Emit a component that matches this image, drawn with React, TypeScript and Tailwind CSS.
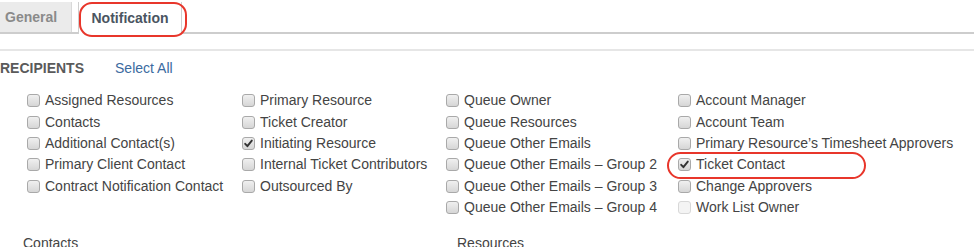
import React from "react";

type Item = { label: string; checked?: boolean; disabled?: boolean; circled?: boolean };

const cols: Item[][] = [
  [
    { label: "Assigned Resources" },
    { label: "Contacts" },
    { label: "Additional Contact(s)" },
    { label: "Primary Client Contact" },
    { label: "Contract Notification Contact" },
  ],
  [
    { label: "Primary Resource" },
    { label: "Ticket Creator" },
    { label: "Initiating Resource", checked: true },
    { label: "Internal Ticket Contributors" },
    { label: "Outsourced By" },
  ],
  [
    { label: "Queue Owner" },
    { label: "Queue Resources" },
    { label: "Queue Other Emails" },
    { label: "Queue Other Emails \u2013 Group 2" },
    { label: "Queue Other Emails \u2013 Group 3" },
    { label: "Queue Other Emails \u2013 Group 4" },
  ],
  [
    { label: "Account Manager" },
    { label: "Account Team" },
    { label: "Primary Resource\u2019s Timesheet Approvers" },
    { label: "Ticket Contact", checked: true, circled: true },
    { label: "Change Approvers" },
    { label: "Work List Owner", disabled: true },
  ],
];

const colX = ["w-[215px]", "w-[204px]", "w-[232px]", "w-[260px]"];

function Box({ checked, disabled }: { checked?: boolean; disabled?: boolean }) {
  return (
    <span
      className={
        "relative inline-block w-[13px] h-[13px] rounded-[3px] border shrink-0 " +
        (disabled
          ? "border-[#d8d8d8] bg-[#f4f4f4]"
          : "border-[#a9a9a9] bg-gradient-to-b from-[#f0f0f0] to-[#d6d6d6]")
      }
    >
      {checked && (
        <svg viewBox="0 0 13 13" className="absolute left-[-1px] top-[-1px] w-[13px] h-[13px]">
          <path d="M3.2 6.8 L5.4 9.2 L9.8 3.6" fill="none" stroke="#333" strokeWidth="1.9" strokeLinecap="round" strokeLinejoin="round" />
        </svg>
      )}
    </span>
  );
}

export default function App() {
  return (
    <div className="w-[974px] h-[247px] overflow-hidden bg-white" style={{ fontFamily: '"Liberation Sans", Arial, sans-serif' }}>
      {/* tabs */}
      <div className="relative flex items-end h-[34px] border-b-2 border-[#cdcdcd]">
        <div className="h-[30px] w-[72px] bg-[#ebebeb] border-r border-[#d9d9d9] flex items-center pl-[5px] text-[14px] font-bold text-[#8a8a8a]">
          General
        </div>
        <div className="ml-[6px] h-[32px] w-[104px] bg-white border-x border-[#cfcfcf] -mb-[2px] flex items-center justify-center text-[14px] font-bold text-[#4a5561]">
          Notification
        </div>
        <div className="absolute left-[79px] top-[2px] w-[108px] h-[35px] rounded-[13px] border-2 border-[#e8362b]" />
      </div>
      <div className="mt-[15px] border-t-2 border-[#e6e6e6]" />

      <div className="flex items-center h-[34px]">
        <span className="text-[14px] font-bold text-[#5a5a5a]">RECIPIENTS</span>
        <span className="ml-[31px] text-[14px] text-[#3b6aa0]">Select All</span>
      </div>

      <div className="flex pl-[27px] mt-[5px]">
        {cols.map((col, ci) => (
          <div key={ci} className={"flex flex-col " + colX[ci]}>
            {col.map((it, ii) => (
              <div key={ii} className="relative flex items-center h-[21.4px] gap-[5px]">
                <Box checked={it.checked} disabled={it.disabled} />
                <span className="text-[14px] text-[#444] whitespace-nowrap">{it.label}</span>
                {it.circled && (
                  <div className="absolute left-[-11px] top-[-2px] w-[199px] h-[27px] rounded-full border-2 border-[#e8362b]" />
                )}
              </div>
            ))}
          </div>
        ))}
      </div>

      <div className="flex mt-[17px] text-[14px] leading-[16px] text-[#444]">
        <span className="ml-[23px] w-[434px]">Contacts</span>
        <span>Resources</span>
      </div>
    </div>
  );
}
